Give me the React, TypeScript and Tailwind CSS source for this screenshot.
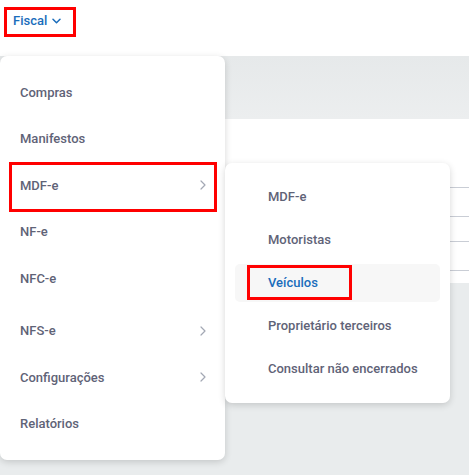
import React from 'react';

const mainItems = [
  { label: 'Compras' },
  { label: 'Manifestos' },
  { label: 'MDF-e', sub: true },
  { label: 'NF-e' },
  { label: 'NFC-e' },
  { label: 'NFS-e', sub: true, gap: true },
  { label: 'Configurações', sub: true },
  { label: 'Relatórios' },
];

const subItems = ['MDF-e', 'Motoristas', 'Veículos', 'Proprietário terceiros', 'Consultar não encerrados'];

const ChevronRight = () => (
  <svg width="6" height="10" viewBox="0 0 6 10" fill="none">
    <path d="M1 1l4 4-4 4" stroke="#a3a8b4" strokeWidth="1.2" strokeLinecap="round" strokeLinejoin="round" />
  </svg>
);

const ChevronDown = () => (
  <svg width="9" height="6" viewBox="0 0 9 6" fill="none">
    <path d="M1 1.2l3.5 3.5L8 1.2" stroke="#1a6dbb" strokeWidth="1.5" strokeLinecap="round" strokeLinejoin="round" />
  </svg>
);

export default function App() {
  return (
    <div className="relative w-[469px] h-[475px] overflow-hidden bg-[#e9eced] font-['Roboto',sans-serif]">
      {/* Header */}
      <div className="h-[56px] bg-white pl-[13px] pt-[11px]">
        <button className="flex items-center gap-[5px] h-[20px] text-[13px] font-medium text-[#1a6dbb]">
          Fiscal
          <ChevronDown />
        </button>
      </div>

      {/* Page content */}
      <div className="h-[63px] bg-gradient-to-b from-[#e6e9ea] to-[#eceeef]" />
      <div className="ml-[24px] h-[164px] bg-white pt-[68px]">
        <div className="h-[29px] border-t border-[#c9cdd5]" />
        <div className="h-[25px] border-t border-[#c9cdd5]" />
        <div className="h-[29px] border-t border-[#c9cdd5]" />
        <div className="border-t border-[#c9cdd5]" />
      </div>

      {/* Main dropdown */}
      <div className="absolute left-0 top-[56px] w-[225px] h-[404px] rounded-[7px] bg-white shadow-[0_2px_7px_rgba(0,0,0,0.16)] pt-[13px]">
        {mainItems.map((item) => (
          <div
            key={item.label}
            className={`flex items-center justify-between h-[46.5px] pl-[20px] pr-[19px] text-[13px] font-medium text-[#5f6377] ${item.gap ? 'mt-[6px]' : ''}`}
          >
            <span>{item.label}</span>
            {item.sub && <ChevronRight />}
          </div>
        ))}
      </div>

      {/* Submenu */}
      <div className="absolute left-[225px] top-[163px] w-[225px] h-[240px] rounded-[7px] bg-white shadow-[0_2px_7px_rgba(0,0,0,0.16)] pt-[12px] px-[10px]">
        {subItems.map((label) => {
          const active = label === 'Veículos';
          return (
            <div key={label} className="h-[43px] py-[2.5px]">
              <div
                className={`flex items-center h-full pl-[33px] rounded-[5px] text-[13px] font-medium ${
                  active ? 'bg-[#f7f7f7] text-[#1a6dbb]' : 'text-[#5f6377]'
                }`}
              >
                {label}
              </div>
            </div>
          );
        })}
      </div>

      {/* Annotation boxes */}
      <div className="absolute left-[4px] top-[7px] w-[72px] h-[30px] border-[3px] border-[#ff0000]" />
      <div className="absolute left-[9px] top-[162px] w-[208px] h-[50px] border-[3px] border-[#ff0000]" />
      <div className="absolute left-[247px] top-[265px] w-[105px] h-[35px] border-[3px] border-[#ff0000]" />
    </div>
  );
}
